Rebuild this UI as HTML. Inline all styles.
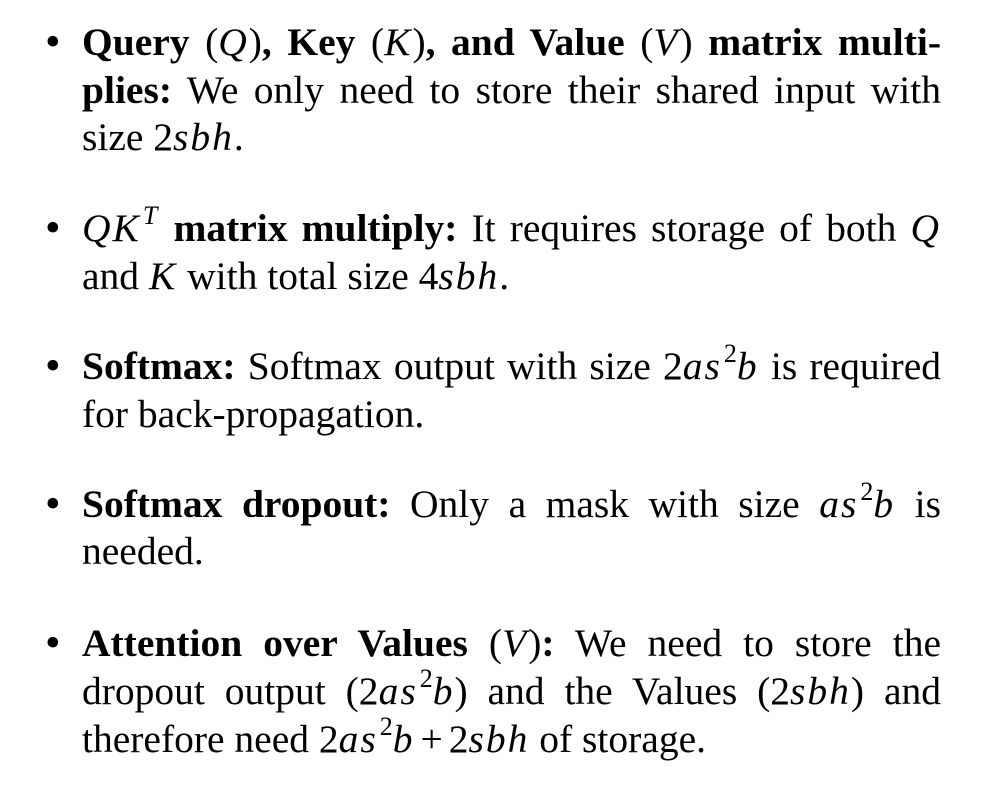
<!DOCTYPE html>
<html><head><meta charset="utf-8"><style>
body{margin:0;background:#fff;width:993px;height:785px;overflow:hidden;position:relative;font-family:"Liberation Serif",serif;color:#000;}
.l{position:absolute;left:82px;width:859px;font-size:39.5px;line-height:48px;white-space:nowrap;}
.j{text-align:justify;text-align-last:justify;white-space:normal;}
.b{position:absolute;left:46px;font-size:39px;line-height:48px;font-weight:bold;}
i{font-style:italic;letter-spacing:2px;}
sup{font-size:26px;line-height:0;position:relative;top:-3px;margin-left:2px;}
.p{margin:0 6px;}
</style></head><body>
<div class="b" style="top:18px">•</div>
<div class="l j" style="top:18px"><b>Query</b> (<i>Q</i>)<b>, Key</b> (<i>K</i>)<b>, and Value</b> (<i>V</i>) <b>matrix multi-</b></div>
<div class="l j" style="top:66px"><b>plies:</b> We only need to store their shared input with</div>
<div class="l" style="top:113px">size 2<i>sbh</i>.</div>

<div class="b" style="top:204px">•</div>
<div class="l j" style="top:204px"><i>QK</i><sup><i>T</i></sup> <b>matrix multiply:</b> It requires storage of both <i>Q</i></div>
<div class="l" style="top:252px">and <i>K</i> with total size 4<i>sbh</i>.</div>

<div class="b" style="top:342px">•</div>
<div class="l j" style="top:342px"><b>Softmax:</b> Softmax output with size 2<i>as</i><sup>2</sup><i>b</i> is required</div>
<div class="l" style="top:390px">for back-propagation.</div>

<div class="b" style="top:480px">•</div>
<div class="l j" style="top:480px"><b>Softmax dropout:</b> Only a mask with size <i>as</i><sup>2</sup><i>b</i> is</div>
<div class="l" style="top:527px">needed.</div>

<div class="b" style="top:619px">•</div>
<div class="l j" style="top:619px"><b>Attention over Values</b> (<i>V</i>)<b>:</b> We need to store the</div>
<div class="l j" style="top:667px">dropout output (2<i>as</i><sup>2</sup><i>b</i>) and the Values (2<i>sbh</i>) and</div>
<div class="l" style="top:715px">therefore need 2<i>as</i><sup>2</sup><i>b</i><span class="p">+</span>2<i>sbh</i> of storage.</div>
</body></html>
